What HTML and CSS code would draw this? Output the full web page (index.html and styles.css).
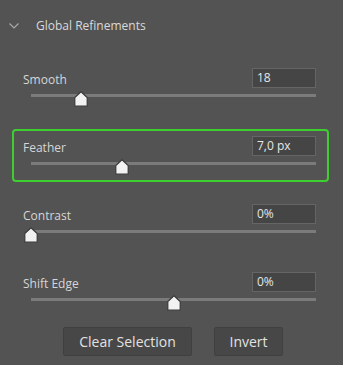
FILE: index.html
```html
<!DOCTYPE html>
<html lang="en">
  <head>
    <meta charset="UTF-8" />
    <meta name="viewport" content="width=device-width, initial-scale=1.0" />
    <title>Global Refinements</title>
    <link rel="stylesheet" href="styles.css">
  </head>
  <body>
    <div class="panel">
      <div class="header">
        <svg class="chevron" width="10" height="6" viewBox="0 0 10 6">
          <polyline points="0.5,0.5 5,5 9.5,0.5" fill="none" stroke="#a9a9a9" stroke-width="1.2" />
        </svg>
        <span class="title">Global Refinements</span>
      </div>

      <div class="fields">
        <div class="field">
          <div class="row">
            <span class="label">Smooth</span>
            <div class="value">18</div>
          </div>
          <div class="slider">
            <div class="track"></div>
            <svg class="thumb" style="left: 17.5%" width="14" height="16" viewBox="0 0 14 16">
              <path d="M7 0.8 L13.2 6.5 L13.2 15.2 L0.8 15.2 L0.8 6.5 Z" fill="#f2f2f2" stroke="#3a3a3a" stroke-width="1.2" stroke-linejoin="round" />
            </svg>
          </div>
        </div>

        <div class="field active">
          <div class="row">
            <span class="label">Feather</span>
            <div class="value">7,0 px</div>
          </div>
          <div class="slider">
            <div class="track"></div>
            <svg class="thumb" style="left: 32%" width="14" height="16" viewBox="0 0 14 16">
              <path d="M7 0.8 L13.2 6.5 L13.2 15.2 L0.8 15.2 L0.8 6.5 Z" fill="#f2f2f2" stroke="#3a3a3a" stroke-width="1.2" stroke-linejoin="round" />
            </svg>
          </div>
        </div>

        <div class="field">
          <div class="row">
            <span class="label">Contrast</span>
            <div class="value">0%</div>
          </div>
          <div class="slider">
            <div class="track"></div>
            <svg class="thumb" style="left: 0%" width="14" height="16" viewBox="0 0 14 16">
              <path d="M7 0.8 L13.2 6.5 L13.2 15.2 L0.8 15.2 L0.8 6.5 Z" fill="#f2f2f2" stroke="#3a3a3a" stroke-width="1.2" stroke-linejoin="round" />
            </svg>
          </div>
        </div>

        <div class="field">
          <div class="row">
            <span class="label">Shift Edge</span>
            <div class="value">0%</div>
          </div>
          <div class="slider">
            <div class="track"></div>
            <svg class="thumb" style="left: 50%" width="14" height="16" viewBox="0 0 14 16">
              <path d="M7 0.8 L13.2 6.5 L13.2 15.2 L0.8 15.2 L0.8 6.5 Z" fill="#f2f2f2" stroke="#3a3a3a" stroke-width="1.2" stroke-linejoin="round" />
            </svg>
          </div>
        </div>
      </div>

      <div class="buttons">
        <button class="btn wide">Clear Selection</button>
        <button class="btn">Invert</button>
      </div>
    </div>
  </body>
</html>
```

FILE: styles.css
```css
html,
body {
  margin: 0;
  background: #535353;
  font-family: "Open Sans", "Noto Sans", sans-serif;
  color: #d6d6d6;
}
.panel {
  width: 343px;
  height: 365px;
  overflow: hidden;
}
.header {
  display: flex;
  align-items: center;
  height: 51px;
  padding-left: 9px;
  margin-bottom: 10px;
}
.chevron {
  margin-top: 1px;
}
.title {
  font-size: 12px;
  margin-left: 17px;
  color: #dadada;
}
.fields {
  display: flex;
  flex-direction: column;
  gap: 15px;
}
.field {
  margin: 0 14px 0 12px;
  border: 2px solid transparent;
  border-radius: 4px;
  padding: 5px 11px 15px 9px;
}
.field.active {
  border-color: #3fce2f;
}
.row {
  display: flex;
  justify-content: space-between;
  align-items: center;
  height: 20px;
}
.label {
  font-size: 12px;
  padding-top: 3px;
}
.value {
  box-sizing: border-box;
  width: 64px;
  height: 20px;
  background: #454545;
  border: 1px solid #656565;
  font-size: 12px;
  line-height: 18px;
  padding-left: 4px;
  color: #e6e6e6;
}
.slider {
  position: relative;
  margin: 6px 0 0 8px;
  height: 3px;
}
.track {
  height: 3px;
  background: #7b7b7b;
}
.thumb {
  position: absolute;
  top: -3px;
  margin-left: -7px;
}
.buttons {
  display: flex;
  justify-content: center;
  gap: 22px;
  padding-left: 3px;
  margin-top: 9px;
}
.btn {
  box-sizing: border-box;
  height: 29px;
  width: 69px;
  background: #474747;
  border: 1px solid #404040;
  border-radius: 2px;
  color: #e2e2e2;
  font-family: "Open Sans", "Noto Sans", sans-serif;
  font-size: 14px;
  padding: 0;
}
.btn.wide {
  width: 129px;
}
```
